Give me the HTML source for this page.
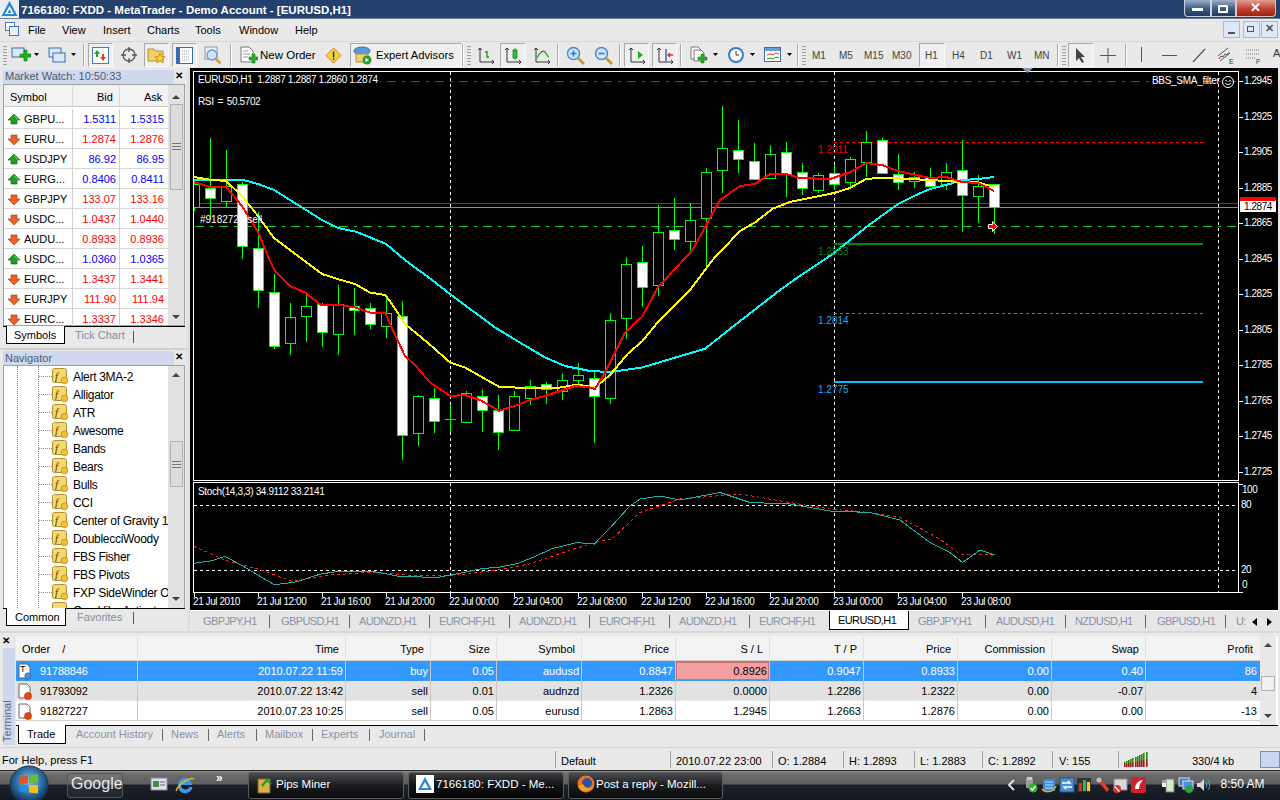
<!DOCTYPE html><html><head><meta charset="utf-8"><style>
*{margin:0;padding:0;box-sizing:border-box}
html,body{width:1280px;height:800px;overflow:hidden;background:#ebebeb;font-family:"Liberation Sans",sans-serif}
.t{position:absolute;white-space:nowrap;line-height:1;font-family:"Liberation Sans",sans-serif}
.r{position:absolute}
svg{position:absolute;left:0;top:0}
</style></head><body><div class="r" style="left:0px;top:0px;width:1280px;height:19px;background:#24406c;"></div>
<svg style="left:0px;top:0px" width="19" height="18" viewBox="0 0 19 18"><rect width="19" height="18" fill="#e8eef4"/><path d="M9.5 1l8 15h-16z" fill="#2a88d0"/><path d="M9.5 6l4.5 8h-9z" fill="#fff"/><path d="M9.5 9l2 4h-4z" fill="#2a88d0"/></svg>
<div class="r" style="left:0px;top:18px;width:1280px;height:1px;background:#6d7f99;"></div>
<div class="t" style="left:21px;top:5px;font-size:11.5px;color:#fff;font-weight:bold;letter-spacing:0px">7166180: FXDD - MetaTrader - Demo Account - [EURUSD,H1]</div>
<div class="r" style="left:1184px;top:0px;width:27px;height:17px;background:linear-gradient(#9db0c8,#3b5a80 55%,#1e3a60);border:1px solid #c9d3e0;border-top:none;border-radius:0 0 0 4px"></div>
<div class="r" style="left:1211px;top:0px;width:25px;height:17px;background:linear-gradient(#9db0c8,#3b5a80 55%,#1e3a60);border:1px solid #c9d3e0;border-top:none"></div>
<div class="r" style="left:1236px;top:0px;width:40px;height:17px;background:linear-gradient(#e0a090,#c04030 55%,#a02010);border:1px solid #e0c0b8;border-top:none;border-radius:0 0 4px 0"></div>
<div class="r" style="left:1192px;top:8px;width:11px;height:3px;background:#fff;"></div>
<div class="r" style="left:1218px;top:5px;width:10px;height:8px;background:transparent;border:2px solid #fff"></div>
<div class="t" style="left:1250px;top:1px;font-size:13px;color:#fff;font-weight:bold">&#x2715;</div>
<div class="r" style="left:0px;top:19px;width:1280px;height:22px;background:#e9e9e9;"></div>
<div class="t" style="left:28px;top:25px;font-size:11px;color:#000;">File</div>
<div class="t" style="left:62px;top:25px;font-size:11px;color:#000;">View</div>
<div class="t" style="left:103px;top:25px;font-size:11px;color:#000;">Insert</div>
<div class="t" style="left:147px;top:25px;font-size:11px;color:#000;">Charts</div>
<div class="t" style="left:195px;top:25px;font-size:11px;color:#000;">Tools</div>
<div class="t" style="left:239px;top:25px;font-size:11px;color:#000;">Window</div>
<div class="t" style="left:295px;top:25px;font-size:11px;color:#000;">Help</div>
<div class="r" style="left:5px;top:22px;width:10px;height:9px;background:#fff;border:1px solid #4a78b8"></div>
<div class="r" style="left:9px;top:26px;width:10px;height:10px;background:#e8f0fa;border:1px solid #4a78b8"></div>
<div class="r" style="left:1223px;top:21px;width:17px;height:17px;background:#dde8f8;border:1px solid #a8b8d8"></div>
<div class="r" style="left:1243px;top:21px;width:17px;height:17px;background:#dde8f8;border:1px solid #a8b8d8"></div>
<div class="r" style="left:1261px;top:21px;width:17px;height:17px;background:#dde8f8;border:1px solid #a8b8d8"></div>
<div class="r" style="left:1228px;top:32px;width:7px;height:2px;background:#555;"></div>
<div class="r" style="left:1247px;top:26px;width:7px;height:6px;background:transparent;border:1px solid #555"></div>
<div class="t" style="left:1265px;top:23px;font-size:11px;color:#555;font-weight:bold">&#x2715;</div>
<div class="r" style="left:0px;top:41px;width:1280px;height:27px;background:#e9e9e9;"></div>
<div class="r" style="left:0px;top:41px;width:1280px;height:1px;background:#d8d8d8;"></div>
<div class="r" style="left:3px;top:46px;width:4px;height:1px;background:#a0a0a0;"></div>
<div class="r" style="left:3px;top:49px;width:4px;height:1px;background:#a0a0a0;"></div>
<div class="r" style="left:3px;top:52px;width:4px;height:1px;background:#a0a0a0;"></div>
<div class="r" style="left:3px;top:55px;width:4px;height:1px;background:#a0a0a0;"></div>
<div class="r" style="left:3px;top:58px;width:4px;height:1px;background:#a0a0a0;"></div>
<div class="r" style="left:3px;top:61px;width:4px;height:1px;background:#a0a0a0;"></div>
<div class="r" style="left:3px;top:64px;width:4px;height:1px;background:#a0a0a0;"></div>
<svg style="left:11px;top:46px" width="20" height="18" viewBox="0 0 20 18"><rect x="1" y="2" width="12" height="9" fill="#dbe8f8" stroke="#3a6ab0"/><path d="M9 8h4v-4h3v4h4v3h-4v4h-3v-4h-4z" fill="#22b022" stroke="#107010" stroke-width=".6"/></svg>
<svg style="left:34px;top:53px" width="6" height="4" viewBox="0 0 6 4"><path d="M0 0h5l-2.5 3z" fill="#000"/></svg>
<svg style="left:48px;top:46px" width="18" height="18" viewBox="0 0 18 18"><rect x="1" y="2" width="12" height="9" fill="#dbe8f8" stroke="#3a6ab0"/><rect x="5" y="7" width="12" height="9" fill="#dbe8f8" stroke="#3a6ab0"/></svg>
<svg style="left:71px;top:53px" width="6" height="4" viewBox="0 0 6 4"><path d="M0 0h5l-2.5 3z" fill="#000"/></svg>
<div class="r" style="left:83px;top:44px;width:1px;height:22px;background:#a8a8a8;"></div>
<div class="r" style="left:84px;top:44px;width:1px;height:22px;background:#fff;"></div>
<div class="r" style="left:88px;top:43px;width:25px;height:24px;background:#efefef;border:1px solid #a8a8a8;border-right-color:#fafafa;border-bottom-color:#fafafa"></div>
<svg style="left:92px;top:47px" width="17" height="17" viewBox="0 0 17 17"><rect x=".5" y=".5" width="16" height="16" fill="#fff" stroke="#4a7ac0"/><path d="M5 3l3 4h-2v3h-2v-3h-2z" fill="#22a022"/><path d="M11 14l3-4h-2v-3h-2v3h-2z" fill="#e04020"/></svg>
<svg style="left:120px;top:46px" width="18" height="18" viewBox="0 0 18 18"><circle cx="9" cy="9" r="6" fill="none" stroke="#555" stroke-width="1.3"/><path d="M9 1v5M9 12v5M1 9h5M12 9h5" stroke="#555" stroke-width="1.3"/></svg>
<div class="r" style="left:144px;top:43px;width:25px;height:24px;background:#efefef;border:1px solid #a8a8a8;border-right-color:#fafafa;border-bottom-color:#fafafa"></div>
<svg style="left:147px;top:46px" width="20" height="18" viewBox="0 0 20 18"><path d="M1 3h6l2 2h7v10h-15z" fill="#f0d070" stroke="#b09030"/><path d="M13 7l1.6 3.4 3.6.4-2.7 2.4.8 3.6-3.3-1.9-3.3 1.9.8-3.6-2.7-2.4 3.6-.4z" fill="#f8d020" stroke="#b08010" stroke-width=".7"/></svg>
<div class="r" style="left:172px;top:43px;width:25px;height:24px;background:#efefef;border:1px solid #a8a8a8;border-right-color:#fafafa;border-bottom-color:#fafafa"></div>
<svg style="left:176px;top:47px" width="17" height="17" viewBox="0 0 17 17"><rect x=".5" y=".5" width="16" height="16" fill="#fff" stroke="#3a6ab0"/><rect x="1" y="1" width="3" height="15" fill="#3a6ab0"/><path d="M6 4h8M6 7h8M6 10h8M6 13h8" stroke="#999" stroke-dasharray="1 1"/></svg>
<svg style="left:203px;top:46px" width="20" height="20" viewBox="0 0 20 20"><rect x="2" y="1" width="12" height="12" fill="#e8eef8" stroke="#999"/><circle cx="9" cy="9" r="5" fill="#cfe4f8" stroke="#6a9ad0" stroke-width="1.3"/><path d="M12.5 12.5l5 5" stroke="#c8a040" stroke-width="2.5"/></svg>
<div class="r" style="left:230px;top:44px;width:1px;height:22px;background:#a8a8a8;"></div>
<div class="r" style="left:231px;top:44px;width:1px;height:22px;background:#fff;"></div>
<svg style="left:240px;top:46px" width="18" height="20" viewBox="0 0 18 20"><path d="M1 1h8l4 4v11h-12z" fill="#fff" stroke="#777"/><path d="M3 5h5M3 8h7M3 11h5" stroke="#999"/><path d="M9 11h3v-3h3v3h3v3h-3v3h-3v-3h-3z" fill="#22b022" stroke="#107010" stroke-width=".5"/></svg>
<div class="t" style="left:260px;top:50px;font-size:11.5px;color:#000;">New Order</div>
<svg style="left:325px;top:47px" width="17" height="17" viewBox="0 0 17 17"><path d="M8.5 1l7.5 7.5-7.5 7.5-7.5-7.5z" fill="#f8d040" stroke="#c09020"/><rect x="7.8" y="4.5" width="1.5" height="6" fill="#333"/><rect x="7.8" y="11.5" width="1.5" height="1.5" fill="#333"/></svg>
<div class="r" style="left:350px;top:43px;width:112px;height:24px;background:#efefef;border:1px solid #a8a8a8;border-right-color:#fafafa;border-bottom-color:#fafafa"></div>
<svg style="left:353px;top:46px" width="20" height="19" viewBox="0 0 20 19"><ellipse cx="9" cy="5" rx="8" ry="4" fill="#5a9ad8" stroke="#3a70b0"/><path d="M3 8h12v8h-12z" fill="#f0d070" stroke="#b09030"/><circle cx="14" cy="14" r="4.5" fill="#22a030"/><path d="M12.5 11.8l3.5 2.2-3.5 2.2z" fill="#fff"/></svg>
<div class="t" style="left:376px;top:50px;font-size:11.2px;color:#000;">Expert Advisors</div>
<div class="r" style="left:462px;top:44px;width:1px;height:22px;background:#a8a8a8;"></div>
<div class="r" style="left:463px;top:44px;width:1px;height:22px;background:#fff;"></div>
<div class="r" style="left:467px;top:46px;width:4px;height:1px;background:#a0a0a0;"></div>
<div class="r" style="left:467px;top:49px;width:4px;height:1px;background:#a0a0a0;"></div>
<div class="r" style="left:467px;top:52px;width:4px;height:1px;background:#a0a0a0;"></div>
<div class="r" style="left:467px;top:55px;width:4px;height:1px;background:#a0a0a0;"></div>
<div class="r" style="left:467px;top:58px;width:4px;height:1px;background:#a0a0a0;"></div>
<div class="r" style="left:467px;top:61px;width:4px;height:1px;background:#a0a0a0;"></div>
<div class="r" style="left:467px;top:64px;width:4px;height:1px;background:#a0a0a0;"></div>
<svg style="left:477px;top:46px" width="18" height="18" viewBox="0 0 18 18"><path d="M3 2v14M1 4l2-2 2 2M3 16h14M15 14l2 2-2 2" stroke="#333" fill="none"/><path d="M10 5v7M8 6h2M10 11h2" stroke="#20a020" stroke-width="1.4" fill="none"/></svg>
<div class="r" style="left:500px;top:43px;width:26px;height:24px;background:#efefef;border:1px solid #a8a8a8;border-right-color:#fafafa;border-bottom-color:#fafafa"></div>
<svg style="left:504px;top:46px" width="18" height="18" viewBox="0 0 18 18"><path d="M3 2v14M1 4l2-2 2 2M3 16h14M15 14l2 2-2 2" stroke="#333" fill="none"/><path d="M11 2v12" stroke="#20a020"/><rect x="9" y="4" width="4" height="8" fill="#30c030" stroke="#107010" stroke-width=".7"/></svg>
<svg style="left:533px;top:46px" width="18" height="18" viewBox="0 0 18 18"><path d="M3 2v14M1 4l2-2 2 2M3 16h14M15 14l2 2-2 2" stroke="#333" fill="none"/><path d="M4 12c3-6 6-8 8-6s2 4 4 5" stroke="#20a020" stroke-width="1.3" fill="none"/></svg>
<div class="r" style="left:557px;top:44px;width:1px;height:22px;background:#a8a8a8;"></div>
<div class="r" style="left:558px;top:44px;width:1px;height:22px;background:#fff;"></div>
<svg style="left:566px;top:46px" width="20" height="20" viewBox="0 0 20 20"><circle cx="7.5" cy="7.5" r="6" fill="#cfe6fb" stroke="#4a8ad8" stroke-width="1.5"/><path d="M4.5 7.5h6M7.5 4.5v6" stroke="#3a78c8" stroke-width="1.6"/><path d="M12 12l6 6" stroke="#c89830" stroke-width="2.6"/></svg>
<svg style="left:594px;top:46px" width="20" height="20" viewBox="0 0 20 20"><circle cx="7.5" cy="7.5" r="6" fill="#cfe6fb" stroke="#4a8ad8" stroke-width="1.5"/><path d="M4.5 7.5h6" stroke="#3a78c8" stroke-width="1.6"/><path d="M12 12l6 6" stroke="#c89830" stroke-width="2.6"/></svg>
<div class="r" style="left:619px;top:44px;width:1px;height:22px;background:#a8a8a8;"></div>
<div class="r" style="left:620px;top:44px;width:1px;height:22px;background:#fff;"></div>
<div class="r" style="left:624px;top:43px;width:25px;height:24px;background:#efefef;border:1px solid #a8a8a8;border-right-color:#fafafa;border-bottom-color:#fafafa"></div>
<svg style="left:628px;top:46px" width="18" height="18" viewBox="0 0 18 18"><path d="M3 2v14M1 4l2-2 2 2M3 16h14M15 14l2 2-2 2" stroke="#333" fill="none"/><path d="M10 5l5 4-5 4z" fill="#20b020"/></svg>
<div class="r" style="left:652px;top:43px;width:25px;height:24px;background:#efefef;border:1px solid #a8a8a8;border-right-color:#fafafa;border-bottom-color:#fafafa"></div>
<svg style="left:656px;top:46px" width="18" height="18" viewBox="0 0 18 18"><path d="M3 2v14M1 4l2-2 2 2M3 16h14M15 14l2 2-2 2" stroke="#333" fill="none"/><path d="M10 3v12" stroke="#2050a0" stroke-width="1.3"/><path d="M17 9h-5M14 7l-2 2 2 2" stroke="#e03020" stroke-width="1.3" fill="none"/></svg>
<div class="r" style="left:680px;top:44px;width:1px;height:22px;background:#a8a8a8;"></div>
<div class="r" style="left:681px;top:44px;width:1px;height:22px;background:#fff;"></div>
<svg style="left:690px;top:46px" width="18" height="19" viewBox="0 0 18 19"><path d="M1 1h7l3 3v9h-10z" fill="#fff" stroke="#777"/><path d="M4 4h7l3 3v8h-10z" fill="#fff" stroke="#777"/><path d="M8 11h3v-3h3v3h3v3h-3v3h-3v-3h-3z" fill="#22b022" stroke="#107010" stroke-width=".5"/></svg>
<svg style="left:713px;top:53px" width="6" height="4" viewBox="0 0 6 4"><path d="M0 0h5l-2.5 3z" fill="#000"/></svg>
<svg style="left:727px;top:46px" width="18" height="18" viewBox="0 0 18 18"><circle cx="9" cy="9" r="8" fill="#3a7ad0"/><circle cx="9" cy="9" r="6" fill="#fff"/><path d="M9 5v4h3" stroke="#333" fill="none"/></svg>
<svg style="left:750px;top:53px" width="6" height="4" viewBox="0 0 6 4"><path d="M0 0h5l-2.5 3z" fill="#000"/></svg>
<svg style="left:764px;top:47px" width="18" height="16" viewBox="0 0 18 16"><rect x=".5" y=".5" width="16" height="14" fill="#fff" stroke="#3a6ab0"/><rect x="1" y="1" width="15" height="3" fill="#6a9ad8"/><path d="M3 8l3-1 3 1 3-2 3 1" stroke="#d04020" fill="none"/><path d="M3 12l3-1 3 1 3-2 3 1" stroke="#20a020" fill="none"/></svg>
<svg style="left:787px;top:53px" width="6" height="4" viewBox="0 0 6 4"><path d="M0 0h5l-2.5 3z" fill="#000"/></svg>
<div class="r" style="left:797px;top:44px;width:1px;height:22px;background:#a8a8a8;"></div>
<div class="r" style="left:798px;top:44px;width:1px;height:22px;background:#fff;"></div>
<div class="r" style="left:802px;top:46px;width:4px;height:1px;background:#a0a0a0;"></div>
<div class="r" style="left:802px;top:49px;width:4px;height:1px;background:#a0a0a0;"></div>
<div class="r" style="left:802px;top:52px;width:4px;height:1px;background:#a0a0a0;"></div>
<div class="r" style="left:802px;top:55px;width:4px;height:1px;background:#a0a0a0;"></div>
<div class="r" style="left:802px;top:58px;width:4px;height:1px;background:#a0a0a0;"></div>
<div class="r" style="left:802px;top:61px;width:4px;height:1px;background:#a0a0a0;"></div>
<div class="r" style="left:802px;top:64px;width:4px;height:1px;background:#a0a0a0;"></div>
<div class="t" style="left:812px;top:51px;font-size:10px;color:#444;">M1</div>
<div class="t" style="left:839px;top:51px;font-size:10px;color:#444;">M5</div>
<div class="t" style="left:864px;top:51px;font-size:10px;color:#444;">M15</div>
<div class="t" style="left:892px;top:51px;font-size:10px;color:#444;">M30</div>
<div class="r" style="left:919px;top:43px;width:26px;height:24px;background:#efefef;border:1px solid #a8a8a8;border-right-color:#fafafa;border-bottom-color:#fafafa"></div>
<div class="t" style="left:925px;top:51px;font-size:10px;color:#444;">H1</div>
<div class="t" style="left:952px;top:51px;font-size:10px;color:#444;">H4</div>
<div class="t" style="left:980px;top:51px;font-size:10px;color:#444;">D1</div>
<div class="t" style="left:1007px;top:51px;font-size:10px;color:#444;">W1</div>
<div class="t" style="left:1034px;top:51px;font-size:10px;color:#444;">MN</div>
<div class="r" style="left:1057px;top:44px;width:1px;height:22px;background:#a8a8a8;"></div>
<div class="r" style="left:1058px;top:44px;width:1px;height:22px;background:#fff;"></div>
<div class="r" style="left:1062px;top:46px;width:4px;height:1px;background:#a0a0a0;"></div>
<div class="r" style="left:1062px;top:49px;width:4px;height:1px;background:#a0a0a0;"></div>
<div class="r" style="left:1062px;top:52px;width:4px;height:1px;background:#a0a0a0;"></div>
<div class="r" style="left:1062px;top:55px;width:4px;height:1px;background:#a0a0a0;"></div>
<div class="r" style="left:1062px;top:58px;width:4px;height:1px;background:#a0a0a0;"></div>
<div class="r" style="left:1062px;top:61px;width:4px;height:1px;background:#a0a0a0;"></div>
<div class="r" style="left:1062px;top:64px;width:4px;height:1px;background:#a0a0a0;"></div>
<div class="r" style="left:1068px;top:43px;width:26px;height:24px;background:#efefef;border:1px solid #a8a8a8;border-right-color:#fafafa;border-bottom-color:#fafafa"></div>
<svg style="left:1074px;top:46px" width="14" height="18" viewBox="0 0 14 18"><path d="M2 2v13l3-3 3 5 2-1-3-5h4z" fill="#444"/></svg>
<svg style="left:1099px;top:47px" width="18" height="17" viewBox="0 0 18 17"><path d="M9 1v15M1 8.5h16" stroke="#555"/></svg>
<div class="r" style="left:1125px;top:44px;width:1px;height:22px;background:#a8a8a8;"></div>
<div class="r" style="left:1126px;top:44px;width:1px;height:22px;background:#fff;"></div>
<div class="r" style="left:1141px;top:47px;width:1px;height:15px;background:#555;"></div>
<div class="r" style="left:1162px;top:55px;width:15px;height:1px;background:#555;"></div>
<svg style="left:1191px;top:47px" width="16" height="17" viewBox="0 0 16 17"><path d="M2 15l12-13" stroke="#555" stroke-width="1.2"/></svg>
<svg style="left:1216px;top:46px" width="20" height="20" viewBox="0 0 20 20"><path d="M2 10l10-8M4 15l10-8M3 13l2-3 2 1 2-3 2 1 2-3" stroke="#555" fill="none"/><text x="13" y="18" font-size="7" fill="#333" font-family="Liberation Sans">E</text></svg>
<svg style="left:1244px;top:46px" width="20" height="20" viewBox="0 0 20 20"><path d="M2 4h14M2 8h14M2 12h10" stroke="#777" stroke-dasharray="1 1"/><text x="12" y="18" font-size="7" fill="#333" font-family="Liberation Sans">F</text></svg>
<div class="t" style="left:1273px;top:48px;font-size:11px;color:#333;">A</div>
<div class="r" style="left:0px;top:68px;width:190px;height:564px;background:#e9e9e9;"></div>
<div class="r" style="left:3px;top:70px;width:171px;height:14px;background:#d0d8ee;"></div>
<div class="t" style="left:5px;top:71px;font-size:11px;color:#4a5a70;">Market Watch: 10:50:33</div>
<div class="t" style="left:175px;top:71px;font-size:10px;color:#000;font-weight:bold">&#x2715;</div>
<div class="r" style="left:3px;top:84px;width:182px;height:242px;background:#fff;border:1px solid #a0a0a0"></div>
<div class="r" style="left:4px;top:85px;width:164px;height:22px;background:#f2f2f2;"></div>
<div class="r" style="left:4px;top:106px;width:164px;height:1px;background:#c8c8c8;"></div>
<div class="r" style="left:72px;top:86px;width:1px;height:20px;background:#d8d8d8;"></div>
<div class="r" style="left:119px;top:86px;width:1px;height:20px;background:#d8d8d8;"></div>
<div class="t" style="left:10px;top:92px;font-size:11px;color:#000;">Symbol</div>
<div class="t" style="left:97px;top:92px;font-size:11px;color:#000;">Bid</div>
<div class="t" style="left:144px;top:92px;font-size:11px;color:#000;">Ask</div>
<div class="r" style="left:168px;top:85px;width:16px;height:240px;background:#e2e2e2;"></div>
<svg style="left:172px;top:95px" width="8" height="5" viewBox="0 0 8 5"><path d="M0 4l4-4 4 4z" fill="#444"/></svg>
<div class="r" style="left:170px;top:104px;width:13px;height:86px;background:#dcdcdc;border:1px solid #b0b0b0"></div>
<div class="r" style="left:172px;top:143px;width:9px;height:1px;background:#777;"></div>
<div class="r" style="left:172px;top:146px;width:9px;height:1px;background:#777;"></div>
<div class="r" style="left:172px;top:149px;width:9px;height:1px;background:#777;"></div>
<svg style="left:172px;top:315px" width="8" height="5" viewBox="0 0 8 5"><path d="M0 0l4 4 4-4z" fill="#444"/></svg>
<div class="r" style="left:4px;top:128px;width:164px;height:1px;background:#d8d8d8;"></div>
<div class="r" style="left:72px;top:109px;width:1px;height:20px;background:#d0d0d0;"></div>
<div class="r" style="left:119px;top:109px;width:1px;height:20px;background:#d0d0d0;"></div>
<div class="t" style="left:24px;top:114px;font-size:11px;color:#000;">GBPU...</div>
<div class="t" style="left:73px;top:114px;width:43px;text-align:right;font-size:11px;color:#0000ff">1.5311</div>
<div class="t" style="left:120px;top:114px;width:44px;text-align:right;font-size:11px;color:#0000ff">1.5315</div>
<svg style="left:8px;top:114px" width="12" height="11" viewBox="0 0 12 11"><path d="M6 0l6 6h-3v4h-6v-4h-3z" fill="#20a020" stroke="#0a600a" stroke-width=".6"/><path d="M6 1.5l4 4" stroke="#90e090" stroke-width=".8"/></svg>
<div class="r" style="left:4px;top:148px;width:164px;height:1px;background:#d8d8d8;"></div>
<div class="r" style="left:72px;top:129px;width:1px;height:20px;background:#d0d0d0;"></div>
<div class="r" style="left:119px;top:129px;width:1px;height:20px;background:#d0d0d0;"></div>
<div class="t" style="left:24px;top:134px;font-size:11px;color:#000;">EURU...</div>
<div class="t" style="left:73px;top:134px;width:43px;text-align:right;font-size:11px;color:#ff0000">1.2874</div>
<div class="t" style="left:120px;top:134px;width:44px;text-align:right;font-size:11px;color:#ff0000">1.2876</div>
<svg style="left:8px;top:134px" width="12" height="11" viewBox="0 0 12 11"><path d="M6 11l6-6h-3v-4h-6v4h-3z" fill="#f06020" stroke="#a03010" stroke-width=".6"/></svg>
<div class="r" style="left:4px;top:168px;width:164px;height:1px;background:#d8d8d8;"></div>
<div class="r" style="left:72px;top:149px;width:1px;height:20px;background:#d0d0d0;"></div>
<div class="r" style="left:119px;top:149px;width:1px;height:20px;background:#d0d0d0;"></div>
<div class="t" style="left:24px;top:154px;font-size:11px;color:#000;">USDJPY</div>
<div class="t" style="left:73px;top:154px;width:43px;text-align:right;font-size:11px;color:#0000ff">86.92</div>
<div class="t" style="left:120px;top:154px;width:44px;text-align:right;font-size:11px;color:#0000ff">86.95</div>
<svg style="left:8px;top:154px" width="12" height="11" viewBox="0 0 12 11"><path d="M6 0l6 6h-3v4h-6v-4h-3z" fill="#20a020" stroke="#0a600a" stroke-width=".6"/><path d="M6 1.5l4 4" stroke="#90e090" stroke-width=".8"/></svg>
<div class="r" style="left:4px;top:188px;width:164px;height:1px;background:#d8d8d8;"></div>
<div class="r" style="left:72px;top:169px;width:1px;height:20px;background:#d0d0d0;"></div>
<div class="r" style="left:119px;top:169px;width:1px;height:20px;background:#d0d0d0;"></div>
<div class="t" style="left:24px;top:174px;font-size:11px;color:#000;">EURG...</div>
<div class="t" style="left:73px;top:174px;width:43px;text-align:right;font-size:11px;color:#0000ff">0.8406</div>
<div class="t" style="left:120px;top:174px;width:44px;text-align:right;font-size:11px;color:#0000ff">0.8411</div>
<svg style="left:8px;top:174px" width="12" height="11" viewBox="0 0 12 11"><path d="M6 0l6 6h-3v4h-6v-4h-3z" fill="#20a020" stroke="#0a600a" stroke-width=".6"/><path d="M6 1.5l4 4" stroke="#90e090" stroke-width=".8"/></svg>
<div class="r" style="left:4px;top:208px;width:164px;height:1px;background:#d8d8d8;"></div>
<div class="r" style="left:72px;top:189px;width:1px;height:20px;background:#d0d0d0;"></div>
<div class="r" style="left:119px;top:189px;width:1px;height:20px;background:#d0d0d0;"></div>
<div class="t" style="left:24px;top:194px;font-size:11px;color:#000;">GBPJPY</div>
<div class="t" style="left:73px;top:194px;width:43px;text-align:right;font-size:11px;color:#ff0000">133.07</div>
<div class="t" style="left:120px;top:194px;width:44px;text-align:right;font-size:11px;color:#ff0000">133.16</div>
<svg style="left:8px;top:194px" width="12" height="11" viewBox="0 0 12 11"><path d="M6 11l6-6h-3v-4h-6v4h-3z" fill="#f06020" stroke="#a03010" stroke-width=".6"/></svg>
<div class="r" style="left:4px;top:228px;width:164px;height:1px;background:#d8d8d8;"></div>
<div class="r" style="left:72px;top:209px;width:1px;height:20px;background:#d0d0d0;"></div>
<div class="r" style="left:119px;top:209px;width:1px;height:20px;background:#d0d0d0;"></div>
<div class="t" style="left:24px;top:214px;font-size:11px;color:#000;">USDC...</div>
<div class="t" style="left:73px;top:214px;width:43px;text-align:right;font-size:11px;color:#ff0000">1.0437</div>
<div class="t" style="left:120px;top:214px;width:44px;text-align:right;font-size:11px;color:#ff0000">1.0440</div>
<svg style="left:8px;top:214px" width="12" height="11" viewBox="0 0 12 11"><path d="M6 11l6-6h-3v-4h-6v4h-3z" fill="#f06020" stroke="#a03010" stroke-width=".6"/></svg>
<div class="r" style="left:4px;top:248px;width:164px;height:1px;background:#d8d8d8;"></div>
<div class="r" style="left:72px;top:229px;width:1px;height:20px;background:#d0d0d0;"></div>
<div class="r" style="left:119px;top:229px;width:1px;height:20px;background:#d0d0d0;"></div>
<div class="t" style="left:24px;top:234px;font-size:11px;color:#000;">AUDU...</div>
<div class="t" style="left:73px;top:234px;width:43px;text-align:right;font-size:11px;color:#ff0000">0.8933</div>
<div class="t" style="left:120px;top:234px;width:44px;text-align:right;font-size:11px;color:#ff0000">0.8936</div>
<svg style="left:8px;top:234px" width="12" height="11" viewBox="0 0 12 11"><path d="M6 11l6-6h-3v-4h-6v4h-3z" fill="#f06020" stroke="#a03010" stroke-width=".6"/></svg>
<div class="r" style="left:4px;top:268px;width:164px;height:1px;background:#d8d8d8;"></div>
<div class="r" style="left:72px;top:249px;width:1px;height:20px;background:#d0d0d0;"></div>
<div class="r" style="left:119px;top:249px;width:1px;height:20px;background:#d0d0d0;"></div>
<div class="t" style="left:24px;top:254px;font-size:11px;color:#000;">USDC...</div>
<div class="t" style="left:73px;top:254px;width:43px;text-align:right;font-size:11px;color:#0000ff">1.0360</div>
<div class="t" style="left:120px;top:254px;width:44px;text-align:right;font-size:11px;color:#0000ff">1.0365</div>
<svg style="left:8px;top:254px" width="12" height="11" viewBox="0 0 12 11"><path d="M6 0l6 6h-3v4h-6v-4h-3z" fill="#20a020" stroke="#0a600a" stroke-width=".6"/><path d="M6 1.5l4 4" stroke="#90e090" stroke-width=".8"/></svg>
<div class="r" style="left:4px;top:288px;width:164px;height:1px;background:#d8d8d8;"></div>
<div class="r" style="left:72px;top:269px;width:1px;height:20px;background:#d0d0d0;"></div>
<div class="r" style="left:119px;top:269px;width:1px;height:20px;background:#d0d0d0;"></div>
<div class="t" style="left:24px;top:274px;font-size:11px;color:#000;">EURC...</div>
<div class="t" style="left:73px;top:274px;width:43px;text-align:right;font-size:11px;color:#ff0000">1.3437</div>
<div class="t" style="left:120px;top:274px;width:44px;text-align:right;font-size:11px;color:#ff0000">1.3441</div>
<svg style="left:8px;top:274px" width="12" height="11" viewBox="0 0 12 11"><path d="M6 11l6-6h-3v-4h-6v4h-3z" fill="#f06020" stroke="#a03010" stroke-width=".6"/></svg>
<div class="r" style="left:4px;top:308px;width:164px;height:1px;background:#d8d8d8;"></div>
<div class="r" style="left:72px;top:289px;width:1px;height:20px;background:#d0d0d0;"></div>
<div class="r" style="left:119px;top:289px;width:1px;height:20px;background:#d0d0d0;"></div>
<div class="t" style="left:24px;top:294px;font-size:11px;color:#000;">EURJPY</div>
<div class="t" style="left:73px;top:294px;width:43px;text-align:right;font-size:11px;color:#ff0000">111.90</div>
<div class="t" style="left:120px;top:294px;width:44px;text-align:right;font-size:11px;color:#ff0000">111.94</div>
<svg style="left:8px;top:294px" width="12" height="11" viewBox="0 0 12 11"><path d="M6 11l6-6h-3v-4h-6v4h-3z" fill="#f06020" stroke="#a03010" stroke-width=".6"/></svg>

<div class="r" style="left:72px;top:309px;width:1px;height:17px;background:#d0d0d0;"></div>
<div class="r" style="left:119px;top:309px;width:1px;height:17px;background:#d0d0d0;"></div>
<div class="t" style="left:24px;top:314px;font-size:11px;color:#000;">EURC...</div>
<div class="t" style="left:73px;top:314px;width:43px;text-align:right;font-size:11px;color:#ff0000">1.3337</div>
<div class="t" style="left:120px;top:314px;width:44px;text-align:right;font-size:11px;color:#ff0000">1.3346</div>
<svg style="left:8px;top:314px" width="12" height="11" viewBox="0 0 12 11"><path d="M6 11l6-6h-3v-4h-6v4h-3z" fill="#f06020" stroke="#a03010" stroke-width=".6"/></svg>
<div class="r" style="left:3px;top:326px;width:182px;height:1px;background:#000;"></div>
<div class="r" style="left:6px;top:326px;width:59px;height:18px;background:#fff;border:1px solid #000;border-top:none"></div>
<div class="t" style="left:14px;top:330px;font-size:11px;color:#000;">Symbols</div>
<div class="t" style="left:75px;top:330px;font-size:11px;color:#8090a0;">Tick Chart</div>
<div class="r" style="left:133px;top:331px;width:1px;height:12px;background:#555;"></div>
<div class="r" style="left:0px;top:348px;width:190px;height:2px;background:#d0d0d0;"></div>
<div class="r" style="left:3px;top:351px;width:171px;height:14px;background:#d0d8ee;"></div>
<div class="t" style="left:5px;top:353px;font-size:11px;color:#4a5a70;">Navigator</div>
<div class="t" style="left:175px;top:352px;font-size:10px;color:#000;font-weight:bold">&#x2715;</div>
<div class="r" style="left:3px;top:365px;width:182px;height:244px;background:#fff;border:1px solid #a0a0a0"></div>
<div class="r" style="left:17px;top:366px;width:1px;height:242px;background:transparent;border-left:1px dotted #888"></div>
<div class="r" style="left:38px;top:366px;width:1px;height:242px;background:transparent;border-left:1px dotted #888"></div>
<div class="r" style="left:39px;top:376px;width:13px;height:1px;background:transparent;border-top:1px dotted #888"></div>
<svg style="left:52px;top:368px" width="17" height="17" viewBox="0 0 17 17"><rect x=".5" y=".5" width="14" height="14" rx="2" fill="#f4d870" stroke="#b09030"/><text x="3" y="12" font-size="11" font-style="italic" fill="#604000" font-family="Liberation Serif">f</text><circle cx="12.5" cy="12.5" r="3.3" fill="#f8c030" stroke="#b08010" stroke-width=".7"/></svg>
<div class="t" style="left:73px;top:371px;font-size:12px;color:#000;letter-spacing:-0.3px">Alert 3MA-2</div>
<div class="r" style="left:39px;top:394px;width:13px;height:1px;background:transparent;border-top:1px dotted #888"></div>
<svg style="left:52px;top:386px" width="17" height="17" viewBox="0 0 17 17"><rect x=".5" y=".5" width="14" height="14" rx="2" fill="#f4d870" stroke="#b09030"/><text x="3" y="12" font-size="11" font-style="italic" fill="#604000" font-family="Liberation Serif">f</text><circle cx="12.5" cy="12.5" r="3.3" fill="#f8c030" stroke="#b08010" stroke-width=".7"/></svg>
<div class="t" style="left:73px;top:389px;font-size:12px;color:#000;letter-spacing:-0.3px">Alligator</div>
<div class="r" style="left:39px;top:412px;width:13px;height:1px;background:transparent;border-top:1px dotted #888"></div>
<svg style="left:52px;top:404px" width="17" height="17" viewBox="0 0 17 17"><rect x=".5" y=".5" width="14" height="14" rx="2" fill="#f4d870" stroke="#b09030"/><text x="3" y="12" font-size="11" font-style="italic" fill="#604000" font-family="Liberation Serif">f</text><circle cx="12.5" cy="12.5" r="3.3" fill="#f8c030" stroke="#b08010" stroke-width=".7"/></svg>
<div class="t" style="left:73px;top:407px;font-size:12px;color:#000;letter-spacing:-0.3px">ATR</div>
<div class="r" style="left:39px;top:430px;width:13px;height:1px;background:transparent;border-top:1px dotted #888"></div>
<svg style="left:52px;top:422px" width="17" height="17" viewBox="0 0 17 17"><rect x=".5" y=".5" width="14" height="14" rx="2" fill="#f4d870" stroke="#b09030"/><text x="3" y="12" font-size="11" font-style="italic" fill="#604000" font-family="Liberation Serif">f</text><circle cx="12.5" cy="12.5" r="3.3" fill="#f8c030" stroke="#b08010" stroke-width=".7"/></svg>
<div class="t" style="left:73px;top:425px;font-size:12px;color:#000;letter-spacing:-0.3px">Awesome</div>
<div class="r" style="left:39px;top:448px;width:13px;height:1px;background:transparent;border-top:1px dotted #888"></div>
<svg style="left:52px;top:440px" width="17" height="17" viewBox="0 0 17 17"><rect x=".5" y=".5" width="14" height="14" rx="2" fill="#f4d870" stroke="#b09030"/><text x="3" y="12" font-size="11" font-style="italic" fill="#604000" font-family="Liberation Serif">f</text><circle cx="12.5" cy="12.5" r="3.3" fill="#f8c030" stroke="#b08010" stroke-width=".7"/></svg>
<div class="t" style="left:73px;top:443px;font-size:12px;color:#000;letter-spacing:-0.3px">Bands</div>
<div class="r" style="left:39px;top:466px;width:13px;height:1px;background:transparent;border-top:1px dotted #888"></div>
<svg style="left:52px;top:458px" width="17" height="17" viewBox="0 0 17 17"><rect x=".5" y=".5" width="14" height="14" rx="2" fill="#f4d870" stroke="#b09030"/><text x="3" y="12" font-size="11" font-style="italic" fill="#604000" font-family="Liberation Serif">f</text><circle cx="12.5" cy="12.5" r="3.3" fill="#f8c030" stroke="#b08010" stroke-width=".7"/></svg>
<div class="t" style="left:73px;top:461px;font-size:12px;color:#000;letter-spacing:-0.3px">Bears</div>
<div class="r" style="left:39px;top:484px;width:13px;height:1px;background:transparent;border-top:1px dotted #888"></div>
<svg style="left:52px;top:476px" width="17" height="17" viewBox="0 0 17 17"><rect x=".5" y=".5" width="14" height="14" rx="2" fill="#f4d870" stroke="#b09030"/><text x="3" y="12" font-size="11" font-style="italic" fill="#604000" font-family="Liberation Serif">f</text><circle cx="12.5" cy="12.5" r="3.3" fill="#f8c030" stroke="#b08010" stroke-width=".7"/></svg>
<div class="t" style="left:73px;top:479px;font-size:12px;color:#000;letter-spacing:-0.3px">Bulls</div>
<div class="r" style="left:39px;top:502px;width:13px;height:1px;background:transparent;border-top:1px dotted #888"></div>
<svg style="left:52px;top:494px" width="17" height="17" viewBox="0 0 17 17"><rect x=".5" y=".5" width="14" height="14" rx="2" fill="#f4d870" stroke="#b09030"/><text x="3" y="12" font-size="11" font-style="italic" fill="#604000" font-family="Liberation Serif">f</text><circle cx="12.5" cy="12.5" r="3.3" fill="#f8c030" stroke="#b08010" stroke-width=".7"/></svg>
<div class="t" style="left:73px;top:497px;font-size:12px;color:#000;letter-spacing:-0.3px">CCI</div>
<div class="r" style="left:39px;top:520px;width:13px;height:1px;background:transparent;border-top:1px dotted #888"></div>
<svg style="left:52px;top:512px" width="17" height="17" viewBox="0 0 17 17"><rect x=".5" y=".5" width="14" height="14" rx="2" fill="#f4d870" stroke="#b09030"/><text x="3" y="12" font-size="11" font-style="italic" fill="#604000" font-family="Liberation Serif">f</text><circle cx="12.5" cy="12.5" r="3.3" fill="#f8c030" stroke="#b08010" stroke-width=".7"/></svg>
<div class="t" style="left:73px;top:515px;font-size:12px;color:#000;letter-spacing:-0.3px">Center of Gravity 1</div>
<div class="r" style="left:39px;top:538px;width:13px;height:1px;background:transparent;border-top:1px dotted #888"></div>
<svg style="left:52px;top:530px" width="17" height="17" viewBox="0 0 17 17"><rect x=".5" y=".5" width="14" height="14" rx="2" fill="#f4d870" stroke="#b09030"/><text x="3" y="12" font-size="11" font-style="italic" fill="#604000" font-family="Liberation Serif">f</text><circle cx="12.5" cy="12.5" r="3.3" fill="#f8c030" stroke="#b08010" stroke-width=".7"/></svg>
<div class="t" style="left:73px;top:533px;font-size:12px;color:#000;letter-spacing:-0.3px">DoublecciWoody</div>
<div class="r" style="left:39px;top:556px;width:13px;height:1px;background:transparent;border-top:1px dotted #888"></div>
<svg style="left:52px;top:548px" width="17" height="17" viewBox="0 0 17 17"><rect x=".5" y=".5" width="14" height="14" rx="2" fill="#f4d870" stroke="#b09030"/><text x="3" y="12" font-size="11" font-style="italic" fill="#604000" font-family="Liberation Serif">f</text><circle cx="12.5" cy="12.5" r="3.3" fill="#f8c030" stroke="#b08010" stroke-width=".7"/></svg>
<div class="t" style="left:73px;top:551px;font-size:12px;color:#000;letter-spacing:-0.3px">FBS Fisher</div>
<div class="r" style="left:39px;top:574px;width:13px;height:1px;background:transparent;border-top:1px dotted #888"></div>
<svg style="left:52px;top:566px" width="17" height="17" viewBox="0 0 17 17"><rect x=".5" y=".5" width="14" height="14" rx="2" fill="#f4d870" stroke="#b09030"/><text x="3" y="12" font-size="11" font-style="italic" fill="#604000" font-family="Liberation Serif">f</text><circle cx="12.5" cy="12.5" r="3.3" fill="#f8c030" stroke="#b08010" stroke-width=".7"/></svg>
<div class="t" style="left:73px;top:569px;font-size:12px;color:#000;letter-spacing:-0.3px">FBS Pivots</div>
<div class="r" style="left:39px;top:592px;width:13px;height:1px;background:transparent;border-top:1px dotted #888"></div>
<svg style="left:52px;top:584px" width="17" height="17" viewBox="0 0 17 17"><rect x=".5" y=".5" width="14" height="14" rx="2" fill="#f4d870" stroke="#b09030"/><text x="3" y="12" font-size="11" font-style="italic" fill="#604000" font-family="Liberation Serif">f</text><circle cx="12.5" cy="12.5" r="3.3" fill="#f8c030" stroke="#b08010" stroke-width=".7"/></svg>
<div class="t" style="left:73px;top:587px;font-size:12px;color:#000;letter-spacing:-0.3px">FXP SideWinder O</div>
<div class="r" style="left:39px;top:602px;width:129px;height:6px;overflow:hidden"><svg style="left:13px;top:0px" width="17" height="17" viewBox="0 0 17 17"><rect x=".5" y=".5" width="14" height="14" rx="2" fill="#f4d870" stroke="#b09030"/></svg><div class="t" style="left:34px;top:3px;font-size:12px;color:#000;letter-spacing:-0.3px">Coral like Activator</div></div>
<div class="r" style="left:168px;top:366px;width:16px;height:242px;background:#e2e2e2;"></div>
<svg style="left:172px;top:373px" width="8" height="5" viewBox="0 0 8 5"><path d="M0 4l4-4 4 4z" fill="#444"/></svg>
<div class="r" style="left:170px;top:441px;width:13px;height:46px;background:#dcdcdc;border:1px solid #b0b0b0"></div>
<div class="r" style="left:172px;top:461px;width:9px;height:1px;background:#777;"></div>
<div class="r" style="left:172px;top:464px;width:9px;height:1px;background:#777;"></div>
<div class="r" style="left:172px;top:467px;width:9px;height:1px;background:#777;"></div>
<svg style="left:172px;top:597px" width="8" height="5" viewBox="0 0 8 5"><path d="M0 0l4 4 4-4z" fill="#444"/></svg>
<div class="r" style="left:3px;top:608px;width:182px;height:1px;background:#000;"></div>
<div class="r" style="left:6px;top:608px;width:60px;height:18px;background:#fff;border:1px solid #000;border-top:none"></div>
<div class="t" style="left:15px;top:612px;font-size:11px;color:#000;">Common</div>
<div class="t" style="left:77px;top:612px;font-size:11px;color:#8090a0;">Favorites</div>
<div class="r" style="left:133px;top:612px;width:1px;height:12px;background:#555;"></div>
<div class="r" style="left:187px;top:68px;width:3px;height:564px;background:#e0e0e0;"></div>
<svg style="left:0;top:0" width="1280" height="800" viewBox="0 0 1280 800" shape-rendering="crispEdges">
<rect x="190" y="68" width="1088" height="542" fill="#000"/>
<rect x="193.5" y="71.5" width="1045" height="409" fill="none" stroke="#fff"/>
<rect x="193.5" y="482.5" width="1045" height="110" fill="none" stroke="#fff"/>
<path d="M450.5 72V480M450.5 483V592" stroke="#fff" stroke-dasharray="3 3"/>
<path d="M834.5 72V480M834.5 483V592" stroke="#fff" stroke-dasharray="3 3"/>
<path d="M1218.5 72V480M1218.5 483V592" stroke="#fff" stroke-dasharray="3 3"/>
<path d="M197 81.5H1238" stroke="#f00" stroke-dasharray="9 6 3 6" stroke-dashoffset="2"/>
<path d="M194 203.5H1238" stroke="#f00"/>
<path d="M194 207.5H1238" stroke="#8090a8"/>
<path d="M194 226.5H1238" stroke="#10d010" stroke-dasharray="9 6 3 6" stroke-dashoffset="23"/>
<path d="M834 142.5H1203" stroke="#f00" stroke-dasharray="3 3"/>
<path d="M834 244H1203" stroke="#080" stroke-width="2"/>
<path d="M834 313.5H1203" stroke="#00a0ff" stroke-dasharray="3 3"/>
<path d="M834 382H1203" stroke="#00bfff" stroke-width="2"/>
<svg x="194" y="72" width="1044" height="408" viewBox="194 72 1044 408" overflow="hidden">
<rect x="194" y="182" width="1" height="29" fill="#0f0"/>
<rect x="189" y="184" width="11" height="24" fill="#0f0"/>
<rect x="190" y="185" width="9" height="22" fill="#000"/>
<rect x="210" y="138" width="1" height="81" fill="#0f0"/>
<rect x="205" y="188" width="11" height="11" fill="#0f0"/>
<rect x="206" y="189" width="9" height="9" fill="#fff"/>
<rect x="226" y="150" width="1" height="57" fill="#0f0"/>
<rect x="221" y="186" width="11" height="16" fill="#0f0"/>
<rect x="222" y="187" width="9" height="14" fill="#000"/>
<rect x="242" y="182" width="1" height="77" fill="#0f0"/>
<rect x="237" y="184" width="11" height="63" fill="#0f0"/>
<rect x="238" y="185" width="9" height="61" fill="#fff"/>
<rect x="258" y="212" width="1" height="96" fill="#0f0"/>
<rect x="253" y="248" width="11" height="43" fill="#0f0"/>
<rect x="254" y="249" width="9" height="41" fill="#fff"/>
<rect x="274" y="274" width="1" height="75" fill="#0f0"/>
<rect x="269" y="292" width="11" height="55" fill="#0f0"/>
<rect x="270" y="293" width="9" height="53" fill="#fff"/>
<rect x="290" y="303" width="1" height="52" fill="#0f0"/>
<rect x="285" y="317" width="11" height="27" fill="#0f0"/>
<rect x="286" y="318" width="9" height="25" fill="#000"/>
<rect x="306" y="295" width="1" height="47" fill="#0f0"/>
<rect x="301" y="306" width="11" height="11" fill="#0f0"/>
<rect x="302" y="307" width="9" height="9" fill="#000"/>
<rect x="322" y="303" width="1" height="44" fill="#0f0"/>
<rect x="317" y="304" width="11" height="29" fill="#0f0"/>
<rect x="318" y="305" width="9" height="27" fill="#fff"/>
<rect x="338" y="285" width="1" height="70" fill="#0f0"/>
<rect x="333" y="304" width="11" height="31" fill="#0f0"/>
<rect x="334" y="305" width="9" height="29" fill="#000"/>
<rect x="354" y="288" width="1" height="47" fill="#0f0"/>
<rect x="349" y="306" width="11" height="5" fill="#0f0"/>
<rect x="350" y="307" width="9" height="3" fill="#fff"/>
<rect x="370" y="303" width="1" height="26" fill="#0f0"/>
<rect x="365" y="308" width="11" height="17" fill="#0f0"/>
<rect x="366" y="309" width="9" height="15" fill="#fff"/>
<rect x="386" y="296" width="1" height="42" fill="#0f0"/>
<rect x="381" y="313" width="11" height="14" fill="#0f0"/>
<rect x="382" y="314" width="9" height="12" fill="#000"/>
<rect x="402" y="301" width="1" height="159" fill="#0f0"/>
<rect x="397" y="316" width="11" height="120" fill="#0f0"/>
<rect x="398" y="317" width="9" height="118" fill="#fff"/>
<rect x="418" y="395" width="1" height="51" fill="#0f0"/>
<rect x="413" y="396" width="11" height="38" fill="#0f0"/>
<rect x="414" y="397" width="9" height="36" fill="#000"/>
<rect x="434" y="388" width="1" height="45" fill="#0f0"/>
<rect x="429" y="398" width="11" height="24" fill="#0f0"/>
<rect x="430" y="399" width="9" height="22" fill="#fff"/>
<rect x="450" y="405" width="1" height="27" fill="#0f0"/>
<rect x="445" y="419" width="11" height="1" fill="#0f0"/>
<rect x="466" y="391" width="1" height="32" fill="#0f0"/>
<rect x="461" y="393" width="11" height="30" fill="#0f0"/>
<rect x="462" y="394" width="9" height="28" fill="#000"/>
<rect x="482" y="389" width="1" height="43" fill="#0f0"/>
<rect x="477" y="396" width="11" height="15" fill="#0f0"/>
<rect x="478" y="397" width="9" height="13" fill="#fff"/>
<rect x="498" y="395" width="1" height="55" fill="#0f0"/>
<rect x="493" y="410" width="11" height="23" fill="#0f0"/>
<rect x="494" y="411" width="9" height="21" fill="#fff"/>
<rect x="514" y="391" width="1" height="40" fill="#0f0"/>
<rect x="509" y="396" width="11" height="35" fill="#0f0"/>
<rect x="510" y="397" width="9" height="33" fill="#000"/>
<rect x="530" y="380" width="1" height="25" fill="#0f0"/>
<rect x="525" y="386" width="11" height="13" fill="#0f0"/>
<rect x="526" y="387" width="9" height="11" fill="#000"/>
<rect x="546" y="382" width="1" height="22" fill="#0f0"/>
<rect x="541" y="384" width="11" height="6" fill="#0f0"/>
<rect x="542" y="385" width="9" height="4" fill="#fff"/>
<rect x="562" y="373" width="1" height="27" fill="#0f0"/>
<rect x="557" y="380" width="11" height="12" fill="#0f0"/>
<rect x="558" y="381" width="9" height="10" fill="#000"/>
<rect x="578" y="363" width="1" height="23" fill="#0f0"/>
<rect x="573" y="375" width="11" height="6" fill="#0f0"/>
<rect x="574" y="376" width="9" height="4" fill="#000"/>
<rect x="594" y="372" width="1" height="71" fill="#0f0"/>
<rect x="589" y="378" width="11" height="19" fill="#0f0"/>
<rect x="590" y="379" width="9" height="17" fill="#fff"/>
<rect x="610" y="313" width="1" height="91" fill="#0f0"/>
<rect x="605" y="320" width="11" height="79" fill="#0f0"/>
<rect x="606" y="321" width="9" height="77" fill="#000"/>
<rect x="626" y="257" width="1" height="82" fill="#0f0"/>
<rect x="621" y="264" width="11" height="55" fill="#0f0"/>
<rect x="622" y="265" width="9" height="53" fill="#000"/>
<rect x="642" y="246" width="1" height="61" fill="#0f0"/>
<rect x="637" y="262" width="11" height="26" fill="#0f0"/>
<rect x="638" y="263" width="9" height="24" fill="#fff"/>
<rect x="658" y="205" width="1" height="91" fill="#0f0"/>
<rect x="653" y="232" width="11" height="54" fill="#0f0"/>
<rect x="654" y="233" width="9" height="52" fill="#000"/>
<rect x="674" y="198" width="1" height="52" fill="#0f0"/>
<rect x="669" y="230" width="11" height="10" fill="#0f0"/>
<rect x="670" y="231" width="9" height="8" fill="#fff"/>
<rect x="690" y="203" width="1" height="49" fill="#0f0"/>
<rect x="685" y="220" width="11" height="22" fill="#0f0"/>
<rect x="686" y="221" width="9" height="20" fill="#000"/>
<rect x="706" y="168" width="1" height="102" fill="#0f0"/>
<rect x="701" y="172" width="11" height="47" fill="#0f0"/>
<rect x="702" y="173" width="9" height="45" fill="#000"/>
<rect x="722" y="106" width="1" height="87" fill="#0f0"/>
<rect x="717" y="148" width="11" height="23" fill="#0f0"/>
<rect x="718" y="149" width="9" height="21" fill="#000"/>
<rect x="738" y="120" width="1" height="53" fill="#0f0"/>
<rect x="733" y="150" width="11" height="10" fill="#0f0"/>
<rect x="734" y="151" width="9" height="8" fill="#fff"/>
<rect x="754" y="143" width="1" height="37" fill="#0f0"/>
<rect x="749" y="161" width="11" height="19" fill="#0f0"/>
<rect x="750" y="162" width="9" height="17" fill="#fff"/>
<rect x="770" y="145" width="1" height="34" fill="#0f0"/>
<rect x="765" y="154" width="11" height="25" fill="#0f0"/>
<rect x="766" y="155" width="9" height="23" fill="#000"/>
<rect x="786" y="142" width="1" height="55" fill="#0f0"/>
<rect x="781" y="152" width="11" height="23" fill="#0f0"/>
<rect x="782" y="153" width="9" height="21" fill="#fff"/>
<rect x="802" y="163" width="1" height="32" fill="#0f0"/>
<rect x="797" y="172" width="11" height="17" fill="#0f0"/>
<rect x="798" y="173" width="9" height="15" fill="#fff"/>
<rect x="818" y="173" width="1" height="20" fill="#0f0"/>
<rect x="813" y="175" width="11" height="16" fill="#0f0"/>
<rect x="814" y="176" width="9" height="14" fill="#000"/>
<rect x="834" y="165" width="1" height="25" fill="#0f0"/>
<rect x="829" y="173" width="11" height="12" fill="#0f0"/>
<rect x="830" y="174" width="9" height="10" fill="#fff"/>
<rect x="850" y="157" width="1" height="30" fill="#0f0"/>
<rect x="845" y="159" width="11" height="24" fill="#0f0"/>
<rect x="846" y="160" width="9" height="22" fill="#000"/>
<rect x="866" y="131" width="1" height="46" fill="#0f0"/>
<rect x="861" y="142" width="11" height="21" fill="#0f0"/>
<rect x="862" y="143" width="9" height="19" fill="#000"/>
<rect x="882" y="138" width="1" height="36" fill="#0f0"/>
<rect x="877" y="140" width="11" height="34" fill="#0f0"/>
<rect x="878" y="141" width="9" height="32" fill="#fff"/>
<rect x="898" y="154" width="1" height="36" fill="#0f0"/>
<rect x="893" y="174" width="11" height="9" fill="#0f0"/>
<rect x="894" y="175" width="9" height="7" fill="#fff"/>
<rect x="914" y="172" width="1" height="16" fill="#0f0"/>
<rect x="909" y="177" width="11" height="5" fill="#0f0"/>
<rect x="910" y="178" width="9" height="3" fill="#000"/>
<rect x="930" y="168" width="1" height="19" fill="#0f0"/>
<rect x="925" y="177" width="11" height="10" fill="#0f0"/>
<rect x="926" y="178" width="9" height="8" fill="#fff"/>
<rect x="946" y="163" width="1" height="27" fill="#0f0"/>
<rect x="941" y="172" width="11" height="13" fill="#0f0"/>
<rect x="942" y="173" width="9" height="11" fill="#000"/>
<rect x="962" y="140" width="1" height="92" fill="#0f0"/>
<rect x="957" y="170" width="11" height="26" fill="#0f0"/>
<rect x="958" y="171" width="9" height="24" fill="#fff"/>
<rect x="978" y="175" width="1" height="48" fill="#0f0"/>
<rect x="973" y="186" width="11" height="11" fill="#0f0"/>
<rect x="974" y="187" width="9" height="9" fill="#000"/>
<rect x="994" y="184" width="1" height="50" fill="#0f0"/>
<rect x="989" y="184" width="11" height="24" fill="#0f0"/>
<rect x="990" y="185" width="9" height="22" fill="#fff"/>
</svg>
</svg>
<svg style="left:0;top:0" width="1280" height="800" viewBox="0 0 1280 800">
<defs><clipPath id="cm"><rect x="194" y="72" width="1044" height="408"/></clipPath><clipPath id="cs"><rect x="194" y="483" width="1044" height="109"/></clipPath></defs>
<g clip-path="url(#cm)" fill="none" stroke-width="2" stroke-linejoin="round" shape-rendering="crispEdges">
<polyline points="194,179.6 242,179.6 258,184 274,190 290,200 306,210 322,220 338,228 357,232 386,244 405,260 432,280 450,294 495,327.5 520,342.6 545,357.5 565,366 590,371 610,372 642,367.5 705,348.75 735,325 780,290 794,280 834,253 867,226.5 898,204 914,196 930,189 946,185 962,180 978,179 994,177" stroke="#00ffff"/>
<polyline points="194,177 210,179.6 226,181 242,196 258,216 274,238 290,250 306,262 322,274 337.5,279 355,284 370,292.5 385,295 390,301 405,324 427.5,342.5 450,362.5 465,367.5 480,376 499,386.75 515,387.5 560,387.5 575,385 590,386 595,387.5 610,375 627.5,354 642.5,341 657.5,322.5 690,290 712.5,260 740,231 755,222.5 772.5,208.75 790,202 834,193 850,188 866,179 882,177.6 930,180 962,182 978,182.4 994,187" stroke="#ffff00"/>
<polyline points="194,182 210,187 226,187 242,206 258,232 269.5,260 275,271 290,286 305,292.5 321,305 340,305 355,307.5 370,312.5 385,312.5 390,324 405,356 415,365 430,382.5 450,396 465,395 480,400 499,410.75 515,406 530,400 545,396 560,391 575,386 590,387.5 595,389 605,372.5 625,332.5 642.5,316 657.5,288 692.5,250 720,200 740,186 755,184 770,174 786,174 800,178 830,179 850,172.4 866,163 882,165 898,171 930,178 946,177 962,182 978,183 994,191" stroke="#ff0000"/>
</g>
<g clip-path="url(#cs)" fill="none" stroke-width="1" shape-rendering="crispEdges">
<path d="M194 505.5H1238M194 570.5H1238" stroke="#fff" stroke-dasharray="3 3" shape-rendering="crispEdges"/>
<polyline points="193.5,546.1 225,560.2 260.3,569.7 292,581.3 330.6,575 372.8,572.1 415,575.6 457,575 499.4,569.7 527.6,564.4 559.2,553.8 594.4,542.6 612,539 640,512.5 680,499 740,494 790,502.5 830,509 870,512.5 900,517.5 940,539 960,554 990,554 995,556" stroke="#ff2020" stroke-dasharray="3 3"/>
<polyline points="193.5,563.3 211,560.9 225,556.3 242.7,566 274.4,584.8 295.5,582 320,574.2 337.7,571.4 372.8,571.4 401,576.7 415,576.7 436,577.7 457,573.9 481.8,568.6 499.4,567.2 517,563.7 534.6,556.7 552,548.6 576.8,542.6 594.4,544 612,525.7 629.5,506.4 640,499 660,496 680,500 720,492.5 750,502.5 790,504 830,511 870,512.5 900,520 930,542.5 950,552.5 962.5,562.5 980,550 995,555" stroke="#20b0a8"/>
</g>
<path d="M988.5 224.5h4v-3l5 5-5 5v-3h-4z" fill="#f00" stroke="#fff" stroke-width="1"/>
</svg>
<div class="t" style="left:198px;top:75px;font-size:10px;color:#fff;background:#000;padding-right:2px;letter-spacing:-0.38px">EURUSD,H1&nbsp; 1.2887 1.2887 1.2860 1.2874</div>
<div class="t" style="left:198px;top:97px;font-size:10px;color:#fff;letter-spacing:-0.38px;word-spacing:1.5px">RSI = 50.5702</div>
<div class="t" style="left:200px;top:215px;font-size:10px;color:#fff;">#9182727 sell</div>
<div class="t" style="left:1152px;top:76px;font-size:10px;color:#fff;letter-spacing:-0.3px">BBS_SMA_filter</div>
<svg style="left:1221px;top:75px" width="14" height="14" viewBox="0 0 14 14"><circle cx="7" cy="7" r="5.5" fill="none" stroke="#fff"/><path d="M4 8c1 2 5 2 6 0" stroke="#fff" fill="none"/><circle cx="5" cy="5.5" r=".7" fill="#fff"/><circle cx="9" cy="5.5" r=".7" fill="#fff"/></svg>
<div class="t" style="left:818px;top:145px;font-size:10px;color:#e00000;">1.2911</div>
<div class="t" style="left:818px;top:247px;font-size:10px;color:#108010;">1.2853</div>
<div class="t" style="left:818px;top:316px;font-size:10px;color:#18aef0;">1.2814</div>
<div class="t" style="left:818px;top:385px;font-size:10px;color:#18aef0;">1.2775</div>
<div class="t" style="left:198px;top:487px;font-size:10px;color:#fff;letter-spacing:-0.37px">Stoch(14,3,3) 34.9112 33.2141</div>
<div class="r" style="left:1239px;top:81px;width:4px;height:1px;background:#fff;"></div>
<div class="t" style="left:1244px;top:76px;font-size:10px;color:#fff;letter-spacing:-0.45px">1.2945</div>
<div class="r" style="left:1239px;top:117px;width:4px;height:1px;background:#fff;"></div>
<div class="t" style="left:1244px;top:112px;font-size:10px;color:#fff;letter-spacing:-0.45px">1.2925</div>
<div class="r" style="left:1239px;top:152px;width:4px;height:1px;background:#fff;"></div>
<div class="t" style="left:1244px;top:147px;font-size:10px;color:#fff;letter-spacing:-0.45px">1.2905</div>
<div class="r" style="left:1239px;top:188px;width:4px;height:1px;background:#fff;"></div>
<div class="t" style="left:1244px;top:183px;font-size:10px;color:#fff;letter-spacing:-0.45px">1.2885</div>
<div class="r" style="left:1239px;top:223px;width:4px;height:1px;background:#fff;"></div>
<div class="t" style="left:1244px;top:218px;font-size:10px;color:#fff;letter-spacing:-0.45px">1.2865</div>
<div class="r" style="left:1239px;top:259px;width:4px;height:1px;background:#fff;"></div>
<div class="t" style="left:1244px;top:254px;font-size:10px;color:#fff;letter-spacing:-0.45px">1.2845</div>
<div class="r" style="left:1239px;top:294px;width:4px;height:1px;background:#fff;"></div>
<div class="t" style="left:1244px;top:289px;font-size:10px;color:#fff;letter-spacing:-0.45px">1.2825</div>
<div class="r" style="left:1239px;top:330px;width:4px;height:1px;background:#fff;"></div>
<div class="t" style="left:1244px;top:325px;font-size:10px;color:#fff;letter-spacing:-0.45px">1.2805</div>
<div class="r" style="left:1239px;top:365px;width:4px;height:1px;background:#fff;"></div>
<div class="t" style="left:1244px;top:360px;font-size:10px;color:#fff;letter-spacing:-0.45px">1.2785</div>
<div class="r" style="left:1239px;top:401px;width:4px;height:1px;background:#fff;"></div>
<div class="t" style="left:1244px;top:396px;font-size:10px;color:#fff;letter-spacing:-0.45px">1.2765</div>
<div class="r" style="left:1239px;top:436px;width:4px;height:1px;background:#fff;"></div>
<div class="t" style="left:1244px;top:431px;font-size:10px;color:#fff;letter-spacing:-0.45px">1.2745</div>
<div class="r" style="left:1239px;top:472px;width:4px;height:1px;background:#fff;"></div>
<div class="t" style="left:1244px;top:467px;font-size:10px;color:#fff;letter-spacing:-0.45px">1.2725</div>
<div class="r" style="left:1240px;top:197px;width:36px;height:5px;background:#f00;"></div>
<div class="r" style="left:1240px;top:201px;width:36px;height:11px;background:#fff;"></div>
<div class="t" style="left:1244px;top:202px;font-size:10px;color:#000;letter-spacing:-0.45px">1.2874</div>
<div class="r" style="left:1239px;top:484px;width:4px;height:1px;background:#fff;"></div>
<div class="r" style="left:1239px;top:592px;width:4px;height:1px;background:#fff;"></div>
<div class="t" style="left:1242px;top:485px;font-size:10px;color:#fff;letter-spacing:-0.45px">100</div>
<div class="t" style="left:1241px;top:500px;font-size:10px;color:#fff;letter-spacing:-0.45px">80</div>
<div class="t" style="left:1241px;top:565px;font-size:10px;color:#fff;letter-spacing:-0.45px">20</div>
<div class="t" style="left:1242px;top:580px;font-size:10px;color:#fff;letter-spacing:-0.45px">0</div>
<div class="r" style="left:194px;top:593px;width:1px;height:4px;background:#fff;"></div>
<div class="t" style="left:193px;top:597px;font-size:10px;color:#fff;letter-spacing:-0.43px">21 Jul 2010</div>
<div class="r" style="left:258px;top:593px;width:1px;height:4px;background:#fff;"></div>
<div class="t" style="left:257px;top:597px;font-size:10px;color:#fff;letter-spacing:-0.43px">21 Jul 12:00</div>
<div class="r" style="left:322px;top:593px;width:1px;height:4px;background:#fff;"></div>
<div class="t" style="left:321px;top:597px;font-size:10px;color:#fff;letter-spacing:-0.43px">21 Jul 16:00</div>
<div class="r" style="left:386px;top:593px;width:1px;height:4px;background:#fff;"></div>
<div class="t" style="left:385px;top:597px;font-size:10px;color:#fff;letter-spacing:-0.43px">21 Jul 20:00</div>
<div class="r" style="left:450px;top:593px;width:1px;height:4px;background:#fff;"></div>
<div class="t" style="left:449px;top:597px;font-size:10px;color:#fff;letter-spacing:-0.43px">22 Jul 00:00</div>
<div class="r" style="left:514px;top:593px;width:1px;height:4px;background:#fff;"></div>
<div class="t" style="left:513px;top:597px;font-size:10px;color:#fff;letter-spacing:-0.43px">22 Jul 04:00</div>
<div class="r" style="left:578px;top:593px;width:1px;height:4px;background:#fff;"></div>
<div class="t" style="left:577px;top:597px;font-size:10px;color:#fff;letter-spacing:-0.43px">22 Jul 08:00</div>
<div class="r" style="left:642px;top:593px;width:1px;height:4px;background:#fff;"></div>
<div class="t" style="left:641px;top:597px;font-size:10px;color:#fff;letter-spacing:-0.43px">22 Jul 12:00</div>
<div class="r" style="left:706px;top:593px;width:1px;height:4px;background:#fff;"></div>
<div class="t" style="left:705px;top:597px;font-size:10px;color:#fff;letter-spacing:-0.43px">22 Jul 16:00</div>
<div class="r" style="left:770px;top:593px;width:1px;height:4px;background:#fff;"></div>
<div class="t" style="left:769px;top:597px;font-size:10px;color:#fff;letter-spacing:-0.43px">22 Jul 20:00</div>
<div class="r" style="left:834px;top:593px;width:1px;height:4px;background:#fff;"></div>
<div class="t" style="left:833px;top:597px;font-size:10px;color:#fff;letter-spacing:-0.43px">23 Jul 00:00</div>
<div class="r" style="left:898px;top:593px;width:1px;height:4px;background:#fff;"></div>
<div class="t" style="left:897px;top:597px;font-size:10px;color:#fff;letter-spacing:-0.43px">23 Jul 04:00</div>
<div class="r" style="left:962px;top:593px;width:1px;height:4px;background:#fff;"></div>
<div class="t" style="left:961px;top:597px;font-size:10px;color:#fff;letter-spacing:-0.43px">23 Jul 08:00</div>
<svg style="left:1022px;top:68px" width="12" height="6" viewBox="0 0 12 6"><path d="M0 0h11l-5.5 5z" fill="#8898b0"/></svg>
<div class="r" style="left:190px;top:610px;width:1090px;height:22px;background:#e6e6e6;"></div>
<div class="r" style="left:190px;top:610px;width:1088px;height:1px;background:#fff;"></div>
<div class="t" style="left:203px;top:616px;font-size:11px;color:#8a90a8;letter-spacing:-0.6px">GBPJPY,H1</div>
<div class="t" style="left:281px;top:616px;font-size:11px;color:#8a90a8;letter-spacing:-0.6px">GBPUSD,H1</div>
<div class="t" style="left:359px;top:616px;font-size:11px;color:#8a90a8;letter-spacing:-0.6px">AUDNZD,H1</div>
<div class="t" style="left:439px;top:616px;font-size:11px;color:#8a90a8;letter-spacing:-0.6px">EURCHF,H1</div>
<div class="t" style="left:519px;top:616px;font-size:11px;color:#8a90a8;letter-spacing:-0.6px">AUDNZD,H1</div>
<div class="t" style="left:599px;top:616px;font-size:11px;color:#8a90a8;letter-spacing:-0.6px">EURCHF,H1</div>
<div class="t" style="left:679px;top:616px;font-size:11px;color:#8a90a8;letter-spacing:-0.6px">AUDNZD,H1</div>
<div class="t" style="left:759px;top:616px;font-size:11px;color:#8a90a8;letter-spacing:-0.6px">EURCHF,H1</div>
<div class="r" style="left:269px;top:615px;width:1px;height:13px;background:#666;"></div>
<div class="r" style="left:349px;top:615px;width:1px;height:13px;background:#666;"></div>
<div class="r" style="left:429px;top:615px;width:1px;height:13px;background:#666;"></div>
<div class="r" style="left:509px;top:615px;width:1px;height:13px;background:#666;"></div>
<div class="r" style="left:589px;top:615px;width:1px;height:13px;background:#666;"></div>
<div class="r" style="left:669px;top:615px;width:1px;height:13px;background:#666;"></div>
<div class="r" style="left:749px;top:615px;width:1px;height:13px;background:#666;"></div>
<div class="r" style="left:985px;top:615px;width:1px;height:13px;background:#666;"></div>
<div class="r" style="left:1065px;top:615px;width:1px;height:13px;background:#666;"></div>
<div class="r" style="left:1145px;top:615px;width:1px;height:13px;background:#666;"></div>
<div class="r" style="left:1225px;top:615px;width:1px;height:13px;background:#666;"></div>
<div class="r" style="left:829px;top:611px;width:80px;height:19px;background:#fff;border:1px solid #000;border-top:none"></div>
<div class="t" style="left:838px;top:615px;font-size:11px;color:#000;letter-spacing:-0.6px">EURUSD,H1</div>
<div class="t" style="left:918px;top:616px;font-size:11px;color:#8a90a8;letter-spacing:-0.6px">GBPJPY,H1</div>
<div class="t" style="left:996px;top:616px;font-size:11px;color:#8a90a8;letter-spacing:-0.6px">AUDUSD,H1</div>
<div class="t" style="left:1075px;top:616px;font-size:11px;color:#8a90a8;letter-spacing:-0.6px">NZDUSD,H1</div>
<div class="t" style="left:1157px;top:616px;font-size:11px;color:#8a90a8;letter-spacing:-0.6px">GBPUSD,H1</div>
<div class="t" style="left:1236px;top:616px;font-size:11px;color:#8a90a8;letter-spacing:-0.6px">U:</div>
<svg style="left:1252px;top:618px" width="6" height="8" viewBox="0 0 6 8"><path d="M5 0v8l-5-4z" fill="#000"/></svg>
<svg style="left:1267px;top:618px" width="6" height="8" viewBox="0 0 6 8"><path d="M0 0v8l5-4z" fill="#000"/></svg>
<div class="r" style="left:0px;top:631px;width:1280px;height:2px;background:#d8d8d8;"></div>
<div class="r" style="left:0px;top:633px;width:1280px;height:114px;background:#e9e9e9;"></div>
<div class="t" style="left:2px;top:636px;font-size:10px;color:#000;font-weight:bold">&#x2715;</div>
<div class="r" style="left:3px;top:648px;width:12px;height:97px;background:#d0d8ee;"></div>
<div class="t" style="left:2px;top:745px;font-size:11px;color:#5a6a80;transform:rotate(-90deg);transform-origin:0 0;width:95px;text-align:left">&nbsp;Terminal</div>
<div class="r" style="left:16px;top:636px;width:1262px;height:89px;background:#fff;"></div>
<div class="r" style="left:16px;top:636px;width:1244px;height:24px;background:#f2f2f2;"></div>
<div class="r" style="left:16px;top:660px;width:1244px;height:1px;background:#d0d0d0;"></div>
<div class="r" style="left:16px;top:661px;width:1244px;height:20px;background:#3399ff;"></div>
<div class="r" style="left:16px;top:681px;width:1244px;height:20px;background:#e2e2e2;"></div>
<div class="r" style="left:16px;top:700px;width:1244px;height:1px;background:#e8e8e8;"></div>
<div class="r" style="left:16px;top:720px;width:1244px;height:1px;background:#d0d0d0;"></div>
<div class="r" style="left:676px;top:662px;width:93px;height:18px;background:#f4a0a0;border:1px solid #d07070"></div>
<div class="r" style="left:137px;top:637px;width:1px;height:22px;background:#e0e0e0;"></div>
<div class="r" style="left:137px;top:661px;width:1px;height:60px;background:#c8c8c8;"></div>
<div class="r" style="left:345px;top:637px;width:1px;height:22px;background:#e0e0e0;"></div>
<div class="r" style="left:345px;top:661px;width:1px;height:60px;background:#c8c8c8;"></div>
<div class="r" style="left:430px;top:637px;width:1px;height:22px;background:#e0e0e0;"></div>
<div class="r" style="left:430px;top:661px;width:1px;height:60px;background:#c8c8c8;"></div>
<div class="r" style="left:496px;top:637px;width:1px;height:22px;background:#e0e0e0;"></div>
<div class="r" style="left:496px;top:661px;width:1px;height:60px;background:#c8c8c8;"></div>
<div class="r" style="left:581px;top:637px;width:1px;height:22px;background:#e0e0e0;"></div>
<div class="r" style="left:581px;top:661px;width:1px;height:60px;background:#c8c8c8;"></div>
<div class="r" style="left:675px;top:637px;width:1px;height:22px;background:#e0e0e0;"></div>
<div class="r" style="left:675px;top:661px;width:1px;height:60px;background:#c8c8c8;"></div>
<div class="r" style="left:769px;top:637px;width:1px;height:22px;background:#e0e0e0;"></div>
<div class="r" style="left:769px;top:661px;width:1px;height:60px;background:#c8c8c8;"></div>
<div class="r" style="left:863px;top:637px;width:1px;height:22px;background:#e0e0e0;"></div>
<div class="r" style="left:863px;top:661px;width:1px;height:60px;background:#c8c8c8;"></div>
<div class="r" style="left:957px;top:637px;width:1px;height:22px;background:#e0e0e0;"></div>
<div class="r" style="left:957px;top:661px;width:1px;height:60px;background:#c8c8c8;"></div>
<div class="r" style="left:1051px;top:637px;width:1px;height:22px;background:#e0e0e0;"></div>
<div class="r" style="left:1051px;top:661px;width:1px;height:60px;background:#c8c8c8;"></div>
<div class="r" style="left:1145px;top:637px;width:1px;height:22px;background:#e0e0e0;"></div>
<div class="r" style="left:1145px;top:661px;width:1px;height:60px;background:#c8c8c8;"></div>
<div class="t" style="left:22px;top:644px;font-size:11px;color:#000;">Order&nbsp;&nbsp;&nbsp;&nbsp;/</div>
<div class="t" style="left:137px;top:644px;width:202px;text-align:right;font-size:11px;color:#000">Time</div>
<div class="t" style="left:345px;top:644px;width:79px;text-align:right;font-size:11px;color:#000">Type</div>
<div class="t" style="left:430px;top:644px;width:60px;text-align:right;font-size:11px;color:#000">Size</div>
<div class="t" style="left:496px;top:644px;width:79px;text-align:right;font-size:11px;color:#000">Symbol</div>
<div class="t" style="left:581px;top:644px;width:88px;text-align:right;font-size:11px;color:#000">Price</div>
<div class="t" style="left:675px;top:644px;width:88px;text-align:right;font-size:11px;color:#000">S / L</div>
<div class="t" style="left:769px;top:644px;width:88px;text-align:right;font-size:11px;color:#000">T / P</div>
<div class="t" style="left:863px;top:644px;width:88px;text-align:right;font-size:11px;color:#000">Price</div>
<div class="t" style="left:957px;top:644px;width:88px;text-align:right;font-size:11px;color:#000">Commission</div>
<div class="t" style="left:1051px;top:644px;width:88px;text-align:right;font-size:11px;color:#000">Swap</div>
<div class="t" style="left:1145px;top:644px;width:108px;text-align:right;font-size:11px;color:#000">Profit</div>
<div class="t" style="left:40px;top:666px;font-size:11px;color:#fff;letter-spacing:-0.15px">91788846</div>
<div class="t" style="left:137px;top:666px;width:206px;text-align:right;font-size:11px;color:#fff">2010.07.22 11:59</div>
<div class="t" style="left:345px;top:666px;width:83px;text-align:right;font-size:11px;color:#fff">buy</div>
<div class="t" style="left:430px;top:666px;width:64px;text-align:right;font-size:11px;color:#fff">0.05</div>
<div class="t" style="left:496px;top:666px;width:83px;text-align:right;font-size:11px;color:#fff">audusd</div>
<div class="t" style="left:581px;top:666px;width:92px;text-align:right;font-size:11px;color:#fff">0.8847</div>
<div class="t" style="left:675px;top:666px;width:92px;text-align:right;font-size:11px;color:#000">0.8926</div>
<div class="t" style="left:769px;top:666px;width:92px;text-align:right;font-size:11px;color:#fff">0.9047</div>
<div class="t" style="left:863px;top:666px;width:92px;text-align:right;font-size:11px;color:#fff">0.8933</div>
<div class="t" style="left:957px;top:666px;width:92px;text-align:right;font-size:11px;color:#fff">0.00</div>
<div class="t" style="left:1051px;top:666px;width:92px;text-align:right;font-size:11px;color:#fff">0.40</div>
<div class="t" style="left:1145px;top:666px;width:112px;text-align:right;font-size:11px;color:#fff">86</div>
<svg style="left:18px;top:663px" width="14" height="17" viewBox="0 0 14 17"><path d="M1 1h8l3 3v11h-11z" fill="#fff" stroke="#666"/><text x="2" y="9" font-size="9" fill="#000" font-family="Liberation Sans">T</text><circle cx="10" cy="13" r="3.2" fill="#3a9ae0" stroke="#1a5aa0" stroke-width=".6"/></svg>
<div class="t" style="left:40px;top:686px;font-size:11px;color:#000;letter-spacing:-0.15px">91793092</div>
<div class="t" style="left:137px;top:686px;width:206px;text-align:right;font-size:11px;color:#000">2010.07.22 13:42</div>
<div class="t" style="left:345px;top:686px;width:83px;text-align:right;font-size:11px;color:#000">sell</div>
<div class="t" style="left:430px;top:686px;width:64px;text-align:right;font-size:11px;color:#000">0.01</div>
<div class="t" style="left:496px;top:686px;width:83px;text-align:right;font-size:11px;color:#000">audnzd</div>
<div class="t" style="left:581px;top:686px;width:92px;text-align:right;font-size:11px;color:#000">1.2326</div>
<div class="t" style="left:675px;top:686px;width:92px;text-align:right;font-size:11px;color:#000">0.0000</div>
<div class="t" style="left:769px;top:686px;width:92px;text-align:right;font-size:11px;color:#000">1.2286</div>
<div class="t" style="left:863px;top:686px;width:92px;text-align:right;font-size:11px;color:#000">1.2322</div>
<div class="t" style="left:957px;top:686px;width:92px;text-align:right;font-size:11px;color:#000">0.00</div>
<div class="t" style="left:1051px;top:686px;width:92px;text-align:right;font-size:11px;color:#000">-0.07</div>
<div class="t" style="left:1145px;top:686px;width:112px;text-align:right;font-size:11px;color:#000">4</div>
<svg style="left:18px;top:683px" width="14" height="17" viewBox="0 0 14 17"><path d="M1 1h8l3 3v11h-11z" fill="#fff" stroke="#666"/><circle cx="10" cy="13" r="3.5" fill="#f04010" stroke="#a02000" stroke-width=".6"/></svg>
<div class="t" style="left:40px;top:706px;font-size:11px;color:#000;letter-spacing:-0.15px">91827227</div>
<div class="t" style="left:137px;top:706px;width:206px;text-align:right;font-size:11px;color:#000">2010.07.23 10:25</div>
<div class="t" style="left:345px;top:706px;width:83px;text-align:right;font-size:11px;color:#000">sell</div>
<div class="t" style="left:430px;top:706px;width:64px;text-align:right;font-size:11px;color:#000">0.05</div>
<div class="t" style="left:496px;top:706px;width:83px;text-align:right;font-size:11px;color:#000">eurusd</div>
<div class="t" style="left:581px;top:706px;width:92px;text-align:right;font-size:11px;color:#000">1.2863</div>
<div class="t" style="left:675px;top:706px;width:92px;text-align:right;font-size:11px;color:#000">1.2945</div>
<div class="t" style="left:769px;top:706px;width:92px;text-align:right;font-size:11px;color:#000">1.2663</div>
<div class="t" style="left:863px;top:706px;width:92px;text-align:right;font-size:11px;color:#000">1.2876</div>
<div class="t" style="left:957px;top:706px;width:92px;text-align:right;font-size:11px;color:#000">0.00</div>
<div class="t" style="left:1051px;top:706px;width:92px;text-align:right;font-size:11px;color:#000">0.00</div>
<div class="t" style="left:1145px;top:706px;width:112px;text-align:right;font-size:11px;color:#000">-13</div>
<svg style="left:18px;top:703px" width="14" height="17" viewBox="0 0 14 17"><path d="M1 1h8l3 3v11h-11z" fill="#fff" stroke="#666"/><circle cx="10" cy="13" r="3.5" fill="#f04010" stroke="#a02000" stroke-width=".6"/></svg>
<div class="r" style="left:1260px;top:636px;width:16px;height:89px;background:#e8e8e8;"></div>
<svg style="left:1264px;top:643px" width="8" height="5" viewBox="0 0 8 5"><path d="M0 4l4-4 4 4z" fill="#444"/></svg>
<div class="r" style="left:1261px;top:676px;width:14px;height:15px;background:#f0f0f0;border:1px solid #b0b0b0"></div>
<svg style="left:1264px;top:714px" width="8" height="5" viewBox="0 0 8 5"><path d="M0 0l4 4 4-4z" fill="#444"/></svg>
<div class="r" style="left:16px;top:725px;width:1262px;height:1px;background:#000;"></div>
<div class="r" style="left:18px;top:725px;width:48px;height:19px;background:#fff;border:1px solid #000;border-top:none"></div>
<div class="t" style="left:27px;top:729px;font-size:11px;color:#000;">Trade</div>
<div class="t" style="left:76px;top:729px;font-size:11px;color:#8a90a8;">Account History</div>
<div class="t" style="left:171px;top:729px;font-size:11px;color:#8a90a8;">News</div>
<div class="t" style="left:217px;top:729px;font-size:11px;color:#8a90a8;">Alerts</div>
<div class="t" style="left:265px;top:729px;font-size:11px;color:#8a90a8;">Mailbox</div>
<div class="t" style="left:321px;top:729px;font-size:11px;color:#8a90a8;">Experts</div>
<div class="t" style="left:379px;top:729px;font-size:11px;color:#8a90a8;">Journal</div>
<div class="r" style="left:162px;top:729px;width:1px;height:12px;background:#666;"></div>
<div class="r" style="left:208px;top:729px;width:1px;height:12px;background:#666;"></div>
<div class="r" style="left:256px;top:729px;width:1px;height:12px;background:#666;"></div>
<div class="r" style="left:312px;top:729px;width:1px;height:12px;background:#666;"></div>
<div class="r" style="left:369px;top:729px;width:1px;height:12px;background:#666;"></div>
<div class="r" style="left:424px;top:729px;width:1px;height:12px;background:#666;"></div>
<div class="r" style="left:0px;top:747px;width:1280px;height:23px;background:#e9e9e9;"></div>
<div class="r" style="left:0px;top:747px;width:1280px;height:1px;background:#d0d0d0;"></div>
<div class="t" style="left:2px;top:755px;font-size:11px;color:#000;">For Help, press F1</div>
<div class="r" style="left:555px;top:751px;width:1px;height:17px;background:#a0a0a0;"></div>
<div class="r" style="left:670px;top:751px;width:1px;height:17px;background:#a0a0a0;"></div>
<div class="r" style="left:772px;top:751px;width:1px;height:17px;background:#a0a0a0;"></div>
<div class="r" style="left:843px;top:751px;width:1px;height:17px;background:#a0a0a0;"></div>
<div class="r" style="left:914px;top:751px;width:1px;height:17px;background:#a0a0a0;"></div>
<div class="r" style="left:982px;top:751px;width:1px;height:17px;background:#a0a0a0;"></div>
<div class="r" style="left:1052px;top:751px;width:1px;height:17px;background:#a0a0a0;"></div>
<div class="r" style="left:1118px;top:751px;width:1px;height:17px;background:#a0a0a0;"></div>
<div class="t" style="left:561px;top:756px;font-size:11px;color:#000;">Default</div>
<div class="t" style="left:676px;top:756px;font-size:11px;color:#000;">2010.07.22 23:00</div>
<div class="t" style="left:778px;top:756px;font-size:11px;color:#000;">O: 1.2884</div>
<div class="t" style="left:849px;top:756px;font-size:11px;color:#000;">H: 1.2893</div>
<div class="t" style="left:920px;top:756px;font-size:11px;color:#000;">L: 1.2883</div>
<div class="t" style="left:988px;top:756px;font-size:11px;color:#000;">C: 1.2892</div>
<div class="t" style="left:1059px;top:756px;font-size:11px;color:#000;">V: 155</div>
<div class="t" style="left:1192px;top:756px;font-size:11px;color:#000;">330/4 kb</div>
<svg style="left:1124px;top:752px" width="24" height="15" viewBox="0 0 24 15"><rect x="0" y="10" width="1.6" height="2" fill="#2a8a10"/><rect x="0" y="12" width="1.6" height="3" fill="#a01818"/><rect x="2" y="9" width="1.6" height="3" fill="#2a8a10"/><rect x="2" y="12" width="1.6" height="3" fill="#a01818"/><rect x="4" y="8" width="1.6" height="3" fill="#2a8a10"/><rect x="4" y="11" width="1.6" height="4" fill="#a01818"/><rect x="6" y="7" width="1.6" height="4" fill="#2a8a10"/><rect x="6" y="11" width="1.6" height="4" fill="#a01818"/><rect x="8" y="6" width="1.6" height="4" fill="#2a8a10"/><rect x="8" y="10" width="1.6" height="5" fill="#a01818"/><rect x="11" y="5" width="1.6" height="5" fill="#2a8a10"/><rect x="11" y="10" width="1.6" height="5" fill="#a01818"/><rect x="13" y="4" width="1.6" height="5" fill="#2a8a10"/><rect x="13" y="9" width="1.6" height="6" fill="#a01818"/><rect x="15" y="3" width="1.6" height="6" fill="#2a8a10"/><rect x="15" y="9" width="1.6" height="6" fill="#a01818"/><rect x="17" y="2" width="1.6" height="6" fill="#2a8a10"/><rect x="17" y="8" width="1.6" height="7" fill="#a01818"/><rect x="19" y="1" width="1.6" height="7" fill="#2a8a10"/><rect x="19" y="8" width="1.6" height="7" fill="#a01818"/><rect x="22" y="0" width="1.6" height="7" fill="#2a8a10"/><rect x="22" y="7" width="1.6" height="8" fill="#a01818"/></svg>
<div class="r" style="left:1260px;top:751px;width:20px;height:17px;background:#c8d8f0;border:1px solid #8090a0"></div>
<div class="r" style="left:0px;top:770px;width:1280px;height:30px;background:linear-gradient(#2a2a2a 0px,#2a2a2a 1px,#8a8a8a 1px,#6c6c6c 4px,#5e5e5e 14px,#1c2028 15px,#141820 30px);"></div>
<svg style="left:8px;top:765px" width="42" height="35" viewBox="0 0 42 35"><defs><radialGradient id="orb" cx="50%" cy="40%" r="60%"><stop offset="0" stop-color="#8ac0e8"/><stop offset=".6" stop-color="#2a6aa0"/><stop offset="1" stop-color="#0a2a50"/></radialGradient></defs><circle cx="21" cy="20" r="19" fill="url(#orb)" stroke="#203040"/><path d="M12 12l8-1.5v7.5l-8 1z" fill="#f05020"/><path d="M21 10.5l9-1.5v8.5l-9 .5z" fill="#60c030"/><path d="M12 20l8 0v7.5l-8-1z" fill="#2090e0"/><path d="M21 20h9v8.5l-9-1z" fill="#f0c020"/></svg>
<div class="r" style="left:67px;top:773px;width:56px;height:25px;background:rgba(255,255,255,.06);border:1px solid #555;border-radius:3px"></div>
<div class="t" style="left:71px;top:776px;font-size:16px;color:#e8e8e8;font-family:"Liberation Serif",serif;letter-spacing:-0.4px">Google</div>
<svg style="left:150px;top:777px" width="18" height="14" viewBox="0 0 18 14"><rect x="1" y="1" width="16" height="12" fill="#dde" stroke="#889"/><rect x="3" y="4" width="6" height="6" fill="#4a8a40"/><path d="M10 5h5M10 8h5" stroke="#666"/></svg>
<svg style="left:174px;top:773px" width="22" height="22" viewBox="0 0 22 22"><path d="M4 12a7 7 0 1 1 14 0h-11a4.5 4.5 0 0 0 8.5 2h3a7 7 0 0 1-14.5-2z" fill="#3a9ae8"/><path d="M2 18c3-8 14-14 18-12" stroke="#e8b020" stroke-width="1.5" fill="none"/></svg>
<div class="t" style="left:216px;top:772px;font-size:12px;color:#fff;font-weight:bold">&#xbb;</div>
<div class="r" style="left:248px;top:772px;width:156px;height:27px;background:linear-gradient(#4a4c50,#1a1c1e 50%,#0a0a0c);border:1px solid #5a5c60;border-radius:3px"></div>
<div class="t" style="left:276px;top:779px;font-size:11.5px;color:#fff;">Pips Miner</div>
<div class="r" style="left:408px;top:772px;width:156px;height:27px;background:linear-gradient(#3a3c40,#101214 50%,#050506);border:1px solid #5a5c60;border-radius:3px"></div>
<div class="t" style="left:436px;top:779px;font-size:11.5px;color:#fff;">7166180: FXDD - Me...</div>
<div class="r" style="left:568px;top:772px;width:155px;height:27px;background:linear-gradient(#4a4c50,#1a1c1e 50%,#0a0a0c);border:1px solid #5a5c60;border-radius:3px"></div>
<div class="t" style="left:596px;top:779px;font-size:11.5px;color:#fff;">Post a reply - Mozill...</div>
<svg style="left:256px;top:775px" width="18" height="20" viewBox="0 0 18 20"><path d="M2 4h12v14h-12z" fill="#d8b050" stroke="#806020"/><path d="M6 11l5-6 4 4" stroke="#20a020" stroke-width="2.2" fill="none"/></svg>
<svg style="left:416px;top:775px" width="18" height="18" viewBox="0 0 18 18"><rect x="0" y="0" width="18" height="18" fill="#fff"/><path d="M9 2l7 13h-14z" fill="#2a8ad0"/><path d="M9 7l3.5 6h-7z" fill="#fff"/></svg>
<svg style="left:576px;top:774px" width="20" height="20" viewBox="0 0 20 20"><circle cx="10" cy="10" r="8.5" fill="#f07020"/><circle cx="11" cy="9" r="5" fill="#3050a0"/><path d="M2 12c2 6 12 8 16 0-3 3-9 3-11-2z" fill="#f0a020"/></svg>
<svg style="left:1008px;top:779px" width="8" height="12" viewBox="0 0 8 12"><path d="M6 1l-5 5 5 5" stroke="#ddd" stroke-width="2" fill="none"/></svg>
<svg style="left:1023px;top:777px" width="17" height="17" viewBox="0 0 17 17"><rect x="3" y="1" width="7" height="10" fill="#9a9aa0"/><rect x="4" y="0" width="5" height="3" fill="#c8c8d0"/><circle cx="10" cy="11" r="4.5" fill="#30b030"/><path d="M7.5 11l2 2 3-4" stroke="#fff" stroke-width="1.3" fill="none"/></svg>
<svg style="left:1041px;top:777px" width="17" height="17" viewBox="0 0 17 17"><rect x="2" y="2" width="12" height="12" fill="#3a8ad8"/><path d="M4 5h8M4 8h8M4 11h8" stroke="#bfe0ff"/><path d="M1 12c3 4 11 4 14-3" stroke="#f0a020" stroke-width="1.5" fill="none"/></svg>
<svg style="left:1059px;top:777px" width="17" height="17" viewBox="0 0 17 17"><rect x="1" y="1" width="14" height="14" fill="#4a90d8" stroke="#20508a"/><path d="M3 6h8l-2-2M13 10h-8l2 2" stroke="#fff" stroke-width="1.4" fill="none"/></svg>
<svg style="left:1077px;top:777px" width="17" height="17" viewBox="0 0 17 17"><rect x="0" y="1" width="14" height="14" fill="#333"/><rect x="2" y="6" width="3" height="8" fill="#e03020"/><rect x="6" y="3" width="3" height="11" fill="#30c030"/><rect x="10" y="5" width="3" height="9" fill="#f0d020"/></svg>
<svg style="left:1095px;top:777px" width="17" height="17" viewBox="0 0 17 17"><path d="M2 3l3-2 9 11-2 3z" fill="#e04030"/><circle cx="4" cy="3" r="2.5" fill="#c0c0c0"/></svg>
<svg style="left:1112px;top:777px" width="17" height="17" viewBox="0 0 17 17"><rect x="2" y="2" width="13" height="11" fill="#d8d8e0" stroke="#888"/><circle cx="5" cy="12" r="4" fill="#e03030"/><path d="M2.5 9.5l5 5" stroke="#fff" stroke-width="1.2"/></svg>
<svg style="left:1131px;top:777px" width="17" height="17" viewBox="0 0 17 17"><rect x="0" y="0" width="15" height="16" rx="2" fill="#d02030"/><path d="M4 12c0-6 5-9 8-9-2 2-4 5-4 9z" fill="#fff"/></svg>
<svg style="left:1160px;top:777px" width="17" height="17" viewBox="0 0 17 17"><rect x="6" y="2" width="8" height="13" fill="#d8e8c8" stroke="#777"/><path d="M2 6h4v4h-4z" fill="#eee"/><path d="M3 3v3M5 3v3" stroke="#eee"/></svg>
<svg style="left:1178px;top:777px" width="17" height="17" viewBox="0 0 17 17"><rect x="1" y="1" width="10" height="8" fill="#3a80d0" stroke="#ddd"/><rect x="5" y="4" width="10" height="8" fill="#4a90e0" stroke="#ddd"/><circle cx="11" cy="12" r="4" fill="#30a040"/></svg>
<svg style="left:1196px;top:777px" width="17" height="17" viewBox="0 0 17 17"><path d="M1 6h3l4-4v12l-4-4h-3z" fill="#d8d8d8"/><path d="M10 5c1 1 1 5 0 6M12 3c2 2 2 8 0 10" stroke="#5aa0d0" fill="none"/></svg>
<div class="t" style="left:1220.5px;top:778px;font-size:12px;color:#fff;">8:50 AM</div></body></html>
